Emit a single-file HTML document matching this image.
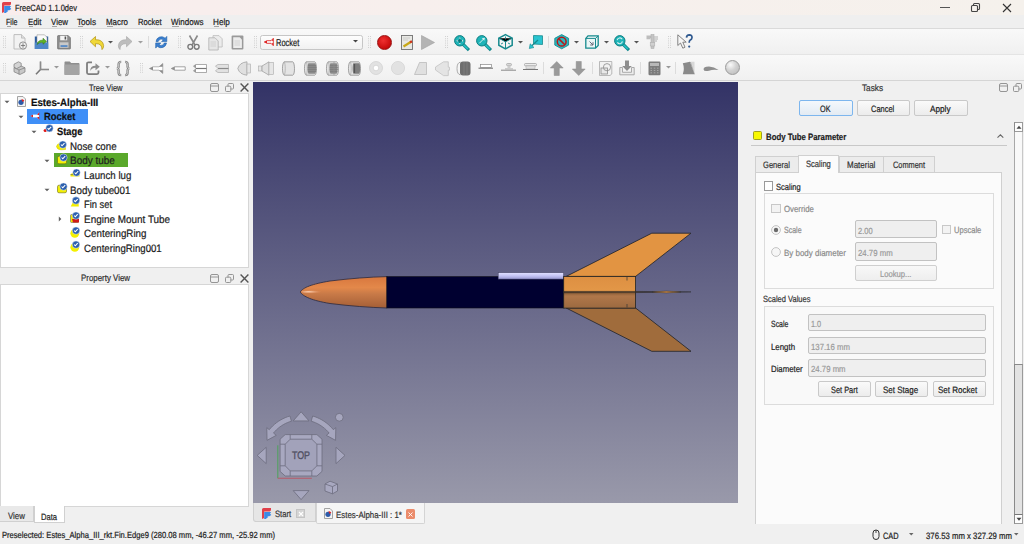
<!DOCTYPE html>
<html><head><meta charset="utf-8">
<style>
*{box-sizing:border-box;margin:0;padding:0}
html,body{width:1024px;height:544px;overflow:hidden;background:#f0f0f0;font-family:"Liberation Sans",sans-serif;color:#1a1a1a}
.a{position:absolute}
.t{position:absolute;white-space:nowrap;line-height:1;transform-origin:0 0}
svg{position:absolute;overflow:visible}
.t{text-rendering:geometricPrecision;-webkit-text-stroke:0.2px currentColor}
</style></head><body>
<div class="a" style="left:0px;top:0px;width:1024px;height:15px;background:linear-gradient(90deg,#f9eded 0%,#f7efed 40%,#f5f1ec 100%)"></div>
<svg style="left:2px;top:2px" width="10" height="11" viewBox="0 0 10 11"><path d="M0 10.8V1.5Q0 0 1.5 0H9V2.2L7.8 3.5H2.2V9.8L1 10.8z" fill="#e0404a"/><path d="M2.2 10.9L2.2 4H9.2L8 5.6L9.3 7L7.4 8.2H5.2L6.2 8.9L3.8 11z" fill="#3a8ae6"/></svg>
<div class="t" style="left:14.60px;top:4.00px;font-size:9.08px;color:#202020;transform:scaleX(0.823);">FreeCAD 1.1.0dev</div>
<div class="a" style="left:940px;top:7px;width:10px;height:1px;background:#555"></div>
<svg style="left:970px;top:2px" width="10" height="10" viewBox="0 0 10 10"><rect x="1.5" y="3.5" width="6" height="6" rx="1" fill="none" stroke="#444" stroke-width="1.1"/><path d="M3.5 3.5V2.5a1 1 0 0 1 1-1h4a1 1 0 0 1 1 1v4a1 1 0 0 1-1 1h-1" fill="none" stroke="#444" stroke-width="1.1"/></svg>
<svg style="left:1002px;top:3px" width="10" height="10" viewBox="0 0 10 10"><path d="M1 1L9 9M9 1L1 9" stroke="#333" stroke-width="1.1"/></svg>
<div class="a" style="left:0px;top:15px;width:1024px;height:13px;background:#efefef"></div>
<div class="t" style="left:6.35px;top:18.00px;font-size:9.08px;color:#202020;transform:scaleX(0.786);">File</div>
<div class="t" style="left:27.85px;top:18.00px;font-size:9.08px;color:#202020;transform:scaleX(0.862);">Edit</div>
<div class="t" style="left:50.85px;top:18.00px;font-size:9.08px;color:#202020;transform:scaleX(0.871);">View</div>
<div class="t" style="left:77.35px;top:18.00px;font-size:9.08px;color:#202020;transform:scaleX(0.896);">Tools</div>
<div class="t" style="left:105.85px;top:18.00px;font-size:9.08px;color:#202020;transform:scaleX(0.872);">Macro</div>
<div class="t" style="left:137.85px;top:18.00px;font-size:9.08px;color:#202020;transform:scaleX(0.840);">Rocket</div>
<div class="t" style="left:170.85px;top:18.00px;font-size:9.08px;color:#202020;transform:scaleX(0.882);">Windows</div>
<div class="t" style="left:212.85px;top:18.00px;font-size:9.08px;color:#202020;transform:scaleX(0.897);">Help</div>
<div class="a" style="left:7px;top:25.6px;width:4px;height:1px;background:#555;opacity:.5"></div>
<div class="a" style="left:28.5px;top:25.6px;width:4px;height:1px;background:#555;opacity:.5"></div>
<div class="a" style="left:51.5px;top:25.6px;width:5px;height:1px;background:#555;opacity:.5"></div>
<div class="a" style="left:78px;top:25.6px;width:4.5px;height:1px;background:#555;opacity:.5"></div>
<div class="a" style="left:106.5px;top:25.6px;width:6px;height:1px;background:#555;opacity:.5"></div>
<div class="a" style="left:171.5px;top:25.6px;width:7px;height:1px;background:#555;opacity:.5"></div>
<div class="a" style="left:213.5px;top:25.6px;width:5px;height:1px;background:#555;opacity:.5"></div>
<div class="a" style="left:0px;top:28px;width:1024px;height:26px;background:linear-gradient(180deg,#f9f9f9,#f0f0f0)"></div>
<div class="a" style="left:0px;top:54px;width:1024px;height:27px;background:linear-gradient(180deg,#f9f9f9,#f0f0f0)"></div>
<div class="a" style="left:0px;top:28px;width:1024px;height:1px;background:#dadada"></div>
<div class="a" style="left:0px;top:54px;width:1024px;height:1px;background:#e4e4e4"></div>
<div class="a" style="left:0px;top:80px;width:1024px;height:1px;background:#d5d5d5"></div>
<svg style="left:3px;top:36px" width="3" height="12" viewBox="0 0 3 12"><path d="M0.5 0V12M2.5 0V12" stroke="#c8c8c8" stroke-width="0.8" stroke-dasharray="1 1.2"/></svg>
<svg style="left:13px;top:34px" width="14" height="16" viewBox="0 0 14 16"><path d="M1 0.6h7.5l3.5 3.5V15H1z" fill="#f2f2f2" stroke="#b8b8b8" stroke-width="0.9"/><path d="M8.5 0.6v3.5H12" fill="#ddd" stroke="#b8b8b8" stroke-width="0.8"/><circle cx="10" cy="11.5" r="3.6" fill="#eee" stroke="#888" stroke-width="0.9"/><path d="M10 9.3v4.4M7.8 11.5h4.4" stroke="#777" stroke-width="0.9"/></svg>
<svg style="left:34px;top:34px" width="15" height="16" viewBox="0 0 15 16"><path d="M0.8 2.5h13.4V15H0.8z" fill="#2b5c9e"/><path d="M3 0.8h7.5l2.5 2.5V9H3z" fill="#fafafa" stroke="#888" stroke-width="0.5"/><path d="M0.8 8.5h13.4V15H0.8z" fill="#4e86c8"/><path d="M3 10.5Q4 5.8 9 6.2V4.2l3.5 3.2L9 10.2V8.4Q5.5 8 3 10.5z" fill="#5fb525" stroke="#2f7010" stroke-width="0.5"/></svg>
<svg style="left:56.5px;top:34.8px" width="14" height="14.2" viewBox="0 0 14 14.2"><path d="M0.6 1.2Q0.6 0.6 1.2 0.6h10l2.2 2.2v10.6q0 .6-.6.6H1.2q-.6 0-.6-.6z" fill="#8e8e8e" stroke="#6a6a6a" stroke-width="0.7"/><rect x="3.2" y="0.8" width="7" height="4.5" fill="#f5f5f5"/><rect x="7.6" y="1.5" width="1.6" height="3" fill="#555"/><rect x="2.5" y="7.3" width="9" height="5.5" fill="#c9c9c9"/><rect x="3.5" y="10.2" width="7" height="1.7" fill="#4f86c6"/></svg>
<svg style="left:80px;top:36px" width="3" height="12" viewBox="0 0 3 12"><path d="M0.5 0V12M2.5 0V12" stroke="#c8c8c8" stroke-width="0.8" stroke-dasharray="1 1.2"/></svg>
<svg style="left:88.5px;top:34.8px" width="16" height="15" viewBox="0 0 16 15"><path d="M1 6.5L6.5 1.5v3.2Q14 4.5 14.6 10.5Q14.8 13 13 14.6Q13.2 8.5 6.5 8.6v3.2z" fill="#f0d838" stroke="#b09010" stroke-width="0.7"/></svg>
<svg style="left:108.2px;top:40.8px" width="5" height="3" viewBox="0 0 5 3"><path d="M0 0h5L2.5 2.6z" fill="#555"/></svg>
<svg style="left:118.4px;top:34.8px" width="15" height="15" viewBox="0 0 15 15"><path d="M14 6.5L8.5 1.5v3.2Q1 4.5 0.4 10.5Q0.2 13 2 14.6Q1.8 8.5 8.5 8.6v3.2z" fill="#bdbdbd" stroke="#a5a5a5" stroke-width="0.6"/></svg>
<svg style="left:138.3px;top:40.8px" width="5" height="3" viewBox="0 0 5 3"><path d="M0 0h5L2.5 2.6z" fill="#a0a0a0"/></svg>
<div class="a" style="left:147.5px;top:36px;width:1px;height:12px;background:#dcdcdc"></div>
<svg style="left:153.5px;top:34.8px" width="14.5" height="14.5" viewBox="0 0 14.5 14.5"><path d="M2 6.5A5.5 5.5 0 0 1 11.2 3.2L12.8 1.4V6.6H7.6L9.4 4.8A3.3 3.3 0 0 0 4.2 6.5z" fill="#3b7fd0" stroke="#1f5fa8" stroke-width="0.6"/><path d="M12.5 8A5.5 5.5 0 0 1 3.3 11.3L1.7 13.1V7.9H6.9L5.1 9.7A3.3 3.3 0 0 0 10.3 8z" fill="#3b7fd0" stroke="#1f5fa8" stroke-width="0.6"/></svg>
<svg style="left:177.5px;top:36px" width="3" height="12" viewBox="0 0 3 12"><path d="M0.5 0V12M2.5 0V12" stroke="#c8c8c8" stroke-width="0.8" stroke-dasharray="1 1.2"/></svg>
<svg style="left:187px;top:34.8px" width="13" height="15" viewBox="0 0 13 15"><path d="M2.5 0.5L8 10M10.5 0.5L5 10" stroke="#8a8a8a" stroke-width="1.6"/><circle cx="3.3" cy="11.8" r="2.4" fill="none" stroke="#7a7a7a" stroke-width="1.4"/><circle cx="9.7" cy="11.8" r="2.4" fill="none" stroke="#7a7a7a" stroke-width="1.4"/></svg>
<svg style="left:208px;top:34.5px" width="15" height="15.5" viewBox="0 0 15 15.5"><path d="M5 0.6h6l3.2 3.2V12H5z" fill="#ececec" stroke="#bbb" stroke-width="0.8"/><path d="M0.8 2.8h6.2l3.2 3.2V15H0.8z" fill="#e6e6e6" stroke="#b0b0b0" stroke-width="0.8"/><path d="M2.5 7h5.5M2.5 9h5.5M2.5 11h5.5" stroke="#c4c4c4" stroke-width="0.6"/></svg>
<svg style="left:231px;top:34.8px" width="13" height="15" viewBox="0 0 13 15"><rect x="0.6" y="0.6" width="11.8" height="13.8" rx="1" fill="#9a9a9a"/><path d="M2.2 2.2h6.5l2.2 2.2v8.5H2.2z" fill="#ececec"/><path d="M3.5 6h5.5M3.5 8h5.5M3.5 10h5.5" stroke="#c4c4c4" stroke-width="0.6"/></svg>
<svg style="left:254px;top:36px" width="3" height="12" viewBox="0 0 3 12"><path d="M0.5 0V12M2.5 0V12" stroke="#c8c8c8" stroke-width="0.8" stroke-dasharray="1 1.2"/></svg>
<div class="a" style="left:259.5px;top:34.5px;width:103px;height:15px;background:linear-gradient(180deg,#fdfdfd,#f1f1f1);border:1px solid #c6c6c6;border-radius:2.5px"></div>
<svg style="left:264px;top:38px" width="10" height="8" viewBox="0 0 10 8"><path d="M0.3 4l2.7-1.3h4L9.3 0.3v7.4L7 5.3H3z" fill="#fff" stroke="#d81818" stroke-width="0.8"/><path d="M0.3 4l2.7-1.3v2.6z" fill="#e01818"/><path d="M7.5 2.7L9.3 0.5v2.2zM7.5 5.3l1.8 2.2V5.3z" fill="#e01818"/></svg>
<div class="t" style="left:276.10px;top:39.00px;font-size:9.88px;color:#1e1e1e;transform:scaleX(0.757);">Rocket</div>
<svg style="left:352.5px;top:40.3px" width="5" height="3" viewBox="0 0 5 3"><path d="M0 0h5L2.5 2.6z" fill="#444"/></svg>
<svg style="left:368.3px;top:36px" width="3" height="12" viewBox="0 0 3 12"><path d="M0.5 0V12M2.5 0V12" stroke="#c8c8c8" stroke-width="0.8" stroke-dasharray="1 1.2"/></svg>
<div class="a" style="left:377px;top:34.6px;width:15px;height:15px;border-radius:50%;background:radial-gradient(circle at 40% 35%,#f03030,#c80c0c 70%,#a00808);border:0.6px solid #9a1010"></div>
<svg style="left:401px;top:34.5px" width="12" height="15" viewBox="0 0 12 15"><rect x="0.5" y="0.5" width="11" height="14" fill="#e8e8e4" stroke="#707070" stroke-width="0.9"/><path d="M2 3h7M2 5h5" stroke="#bbb" stroke-width="0.6"/><path d="M2.5 11.5L10.5 6.5" stroke="#c8a818" stroke-width="2.2"/><path d="M9 7.4L11 6.2" stroke="#d03020" stroke-width="2.2"/></svg>
<svg style="left:421px;top:34.8px" width="14" height="15" viewBox="0 0 14 15"><path d="M0.5 0.5L13.5 7.5L0.5 14.5z" fill="#b4b4b4" stroke="#a0a0a0" stroke-width="0.6"/></svg>
<svg style="left:445px;top:36px" width="3" height="12" viewBox="0 0 3 12"><path d="M0.5 0V12M2.5 0V12" stroke="#c8c8c8" stroke-width="0.8" stroke-dasharray="1 1.2"/></svg>
<svg style="left:453.5px;top:34.5px" width="16" height="16" viewBox="0 0 16 16"><path d="M9 9.2L13.8 14" stroke="#148a8e" stroke-width="3.2" stroke-linecap="square"/><path d="M9 9.2L13.8 14" stroke="#25c0c4" stroke-width="1.6"/><circle cx="5.8" cy="5.8" r="5.2" fill="#1eb4b8" stroke="#0e7e82" stroke-width="1"/><path d="M5.8 2.5v6.6M2.5 5.8h6.6" stroke="#0e6a6e" stroke-width="1"/><path d="M5.8 2.3l-1.2 1.3h2.4zM5.8 9.3l-1.2-1.3h2.4zM2.3 5.8l1.3-1.2v2.4zM9.3 5.8l-1.3-1.2v2.4z" fill="#d8f0f0"/></svg>
<svg style="left:475.5px;top:34.5px" width="16" height="16" viewBox="0 0 16 16"><path d="M9 9.2L13.8 14" stroke="#148a8e" stroke-width="3.2" stroke-linecap="square"/><path d="M9 9.2L13.8 14" stroke="#25c0c4" stroke-width="1.6"/><circle cx="5.8" cy="5.8" r="5.2" fill="#1eb4b8" stroke="#0e7e82" stroke-width="1"/><path d="M3.3 8.3L8.3 3.3" stroke="#d8f0f0" stroke-width="1"/><path d="M8.8 2.8l-3 .5 2.5 2.5z" fill="#d8f0f0"/></svg>
<svg style="left:497.8px;top:34.4px" width="15" height="15.4" viewBox="0 0 15 15.4"><path d="M7.5 0.6L14.2 4.2V11.2L7.5 14.8L0.8 11.2V4.2z" fill="none" stroke="#178a8e" stroke-width="1.5"/><path d="M0.8 4.2L7.5 7.8L14.2 4.2M7.5 7.8V14.8" stroke="#178a8e" stroke-width="1"/><path d="M7.5 2.5v3M3 10l2-1M12 10l-2-1" stroke="#178a8e" stroke-width="0.9"/></svg>
<svg style="left:517.5px;top:40.8px" width="5" height="3" viewBox="0 0 5 3"><path d="M0 0h5L2.5 2.6z" fill="#555"/></svg>
<svg style="left:529px;top:35.3px" width="14" height="14" viewBox="0 0 14 14"><path d="M4.5 0.5L13.5 0.8V9.5L4.5 9z" fill="#29c4d0" stroke="#178a8e" stroke-width="0.8"/><path d="M9 5L2.5 11" stroke="#178a8e" stroke-width="1.3"/><path d="M0.3 13.6L1.2 8.8L5 12.5z" fill="#29c4d0" stroke="#178a8e" stroke-width="0.6"/></svg>
<div class="a" style="left:548.3px;top:36px;width:1px;height:12px;background:#dcdcdc"></div>
<svg style="left:554.4px;top:34.4px" width="15.4" height="15.4" viewBox="0 0 15.4 15.4"><path d="M7.7 0.6L14.6 4.3V11.1L7.7 14.8L0.8 11.1V4.3z" fill="#29b8c0" stroke="#178a8e" stroke-width="0.9"/><circle cx="7.7" cy="7.7" r="4.4" fill="none" stroke="#b81818" stroke-width="1.5"/><path d="M4.6 4.6L10.8 10.8" stroke="#b81818" stroke-width="1.5"/></svg>
<svg style="left:574.3px;top:40.8px" width="5" height="3" viewBox="0 0 5 3"><path d="M0 0h5L2.5 2.6z" fill="#555"/></svg>
<svg style="left:585.2px;top:35.3px" width="14" height="14" viewBox="0 0 14 14"><path d="M3 0.8h10.2v9.6L10.5 13.2H0.8V3.4z" fill="#eaf6f6" stroke="#178a8e" stroke-width="1.3"/><path d="M0.8 3.4h9.7V13.2M10.5 3.4L13.2 0.8" fill="none" stroke="#178a8e" stroke-width="1"/><path d="M4.5 6.5l3.5 3.5M5.2 10h2.8V7.2" fill="none" stroke="#667" stroke-width="1"/></svg>
<svg style="left:604.2px;top:40.8px" width="5" height="3" viewBox="0 0 5 3"><path d="M0 0h5L2.5 2.6z" fill="#555"/></svg>
<svg style="left:614px;top:34.5px" width="16" height="16" viewBox="0 0 16 16"><path d="M9 9.2L13.8 14" stroke="#148a8e" stroke-width="3.2" stroke-linecap="square"/><path d="M9 9.2L13.8 14" stroke="#25c0c4" stroke-width="1.6"/><circle cx="5.8" cy="5.8" r="5.2" fill="#1eb4b8" stroke="#0e7e82" stroke-width="1"/><path d="M3.2 5.2A2.7 2.7 0 0 1 8.2 4.2M8.4 6.4A2.7 2.7 0 0 1 3.4 7.4" fill="none" stroke="#d8f0f0" stroke-width="1.1"/></svg>
<svg style="left:634.3px;top:40.8px" width="5" height="3" viewBox="0 0 5 3"><path d="M0 0h5L2.5 2.6z" fill="#555"/></svg>
<svg style="left:646px;top:34.4px" width="12.5" height="15" viewBox="0 0 12.5 15"><path d="M0.5 1.5h7.5v2.5H4.5v1.2H0.5z" fill="#bdbdbd"/><rect x="5" y="0.5" width="3" height="14" fill="#c4c4c4" stroke="#a8a8a8" stroke-width="0.5"/><path d="M8 3h4M8 5h4M8 7h3" stroke="#b0b0b0" stroke-width="1"/><rect x="4.2" y="8.5" width="4.6" height="3.5" fill="#d0d0d0" stroke="#aaa" stroke-width="0.5"/></svg>
<svg style="left:668.4px;top:36px" width="3" height="12" viewBox="0 0 3 12"><path d="M0.5 0V12M2.5 0V12" stroke="#c8c8c8" stroke-width="0.8" stroke-dasharray="1 1.2"/></svg>
<svg style="left:677.2px;top:34.4px" width="16" height="15.5" viewBox="0 0 16 15.5"><path d="M0.8 0.8L0.8 11.5L3.5 9L5.8 14.2L8 13.2L5.8 8.2H9.2z" fill="#f6f6f6" stroke="#777" stroke-width="0.9"/><path d="M9.5 3.6Q9.6 0.8 12.3 0.8Q15.2 0.9 15 3.6Q14.8 5.3 13 6.3Q12.2 6.8 12.2 8.8" fill="none" stroke="#305a90" stroke-width="1.7"/><circle cx="12.2" cy="12.6" r="1.1" fill="#305a90"/></svg>
<svg style="left:3px;top:62.5px" width="3" height="11.0" viewBox="0 0 3 11.0"><path d="M0.5 0V11.0M2.5 0V11.0" stroke="#c8c8c8" stroke-width="0.8" stroke-dasharray="1 1.2"/></svg>
<svg style="left:12.7px;top:60.8px" width="13" height="14" viewBox="0 0 13 14"><path d="M1 6.5L6 4L12 6.8V11L7 13.5L1 10.8z" fill="#c8c8c8" stroke="#7a7a7a" stroke-width="0.7"/><path d="M1 6.5L6 9V13.5M6 9l6-2.2" fill="none" stroke="#7a7a7a" stroke-width="0.7"/><path d="M1 3.2L5.5 0.8L8.2 2.2V5.2L3.7 7.6L1 6.2z" fill="#d4d4d4" stroke="#7a7a7a" stroke-width="0.7"/></svg>
<svg style="left:35px;top:60.8px" width="14.5" height="14" viewBox="0 0 14.5 14"><path d="M5.5 0.6V8.5M5.5 8.5H14M5.5 8.5L1 13.2" fill="none" stroke="#777" stroke-width="1.6"/><path d="M5.5 0.6V8.5H14" fill="none" stroke="#999" stroke-width="0.6"/></svg>
<svg style="left:53.5px;top:66.3px" width="5" height="3" viewBox="0 0 5 3"><path d="M0 0h5L2.5 2.6z" fill="#999"/></svg>
<svg style="left:63.7px;top:61.3px" width="15.5" height="14.2" viewBox="0 0 15.5 14.2"><path d="M0.5 1.2Q0.5 0.5 1.2 0.5h4.5l1.5 1.6h7.5q.8 0 .8.8v10.4q0 .8-.8.8H1.2q-.7 0-.7-.8z" fill="#8e8e8e"/><path d="M0.5 3.5h14.5v9.8q0 .8-.8.8H1.2q-.7 0-.7-.8z" fill="#a4a4a4"/></svg>
<svg style="left:86.3px;top:61.3px" width="14.2" height="13.8" viewBox="0 0 14.2 13.8"><path d="M6 1.3H2.5q-1.5 0-1.5 1.5v8.8q0 1.5 1.5 1.5h8.5q1.5 0 1.5-1.5V9.5" fill="none" stroke="#7e7e7e" stroke-width="1.8"/><path d="M4.2 10Q4.2 4.8 9.5 4.8V2.2L13.8 5.8L9.5 9.3V6.8Q6.2 6.8 4.2 10z" fill="#8e8e8e"/></svg>
<svg style="left:105.3px;top:66.3px" width="5" height="3" viewBox="0 0 5 3"><path d="M0 0h5L2.5 2.6z" fill="#999"/></svg>
<svg style="left:116.2px;top:60.8px" width="14.2" height="15" viewBox="0 0 14.2 15"><path d="M5.2 0.8Q2.6 0.8 2.6 3.2V5.6Q2.6 7.5 0.8 7.5Q2.6 7.5 2.6 9.4V11.8Q2.6 14.2 5.2 14.2M9 0.8Q11.6 0.8 11.6 3.2V5.6Q11.6 7.5 13.4 7.5Q11.6 7.5 11.6 9.4V11.8Q11.6 14.2 9 14.2" fill="none" stroke="#7e7e7e" stroke-width="2.3"/><path d="M5.2 0.8Q2.6 0.8 2.6 3.2V5.6Q2.6 7.5 0.8 7.5Q2.6 7.5 2.6 9.4V11.8Q2.6 14.2 5.2 14.2M9 0.8Q11.6 0.8 11.6 3.2V5.6Q11.6 7.5 13.4 7.5Q11.6 7.5 11.6 9.4V11.8Q11.6 14.2 9 14.2" fill="none" stroke="#e6e6e6" stroke-width="0.7"/></svg>
<svg style="left:140px;top:62.5px" width="3" height="11.0" viewBox="0 0 3 11.0"><path d="M0.5 0V11.0M2.5 0V11.0" stroke="#c8c8c8" stroke-width="0.8" stroke-dasharray="1 1.2"/></svg>
<svg style="left:149px;top:62.6px" width="14.4" height="11" viewBox="0 0 14.4 11"><path d="M0.5 5.5L4 3.8h6L13.8 0.5V10.5L10 7.2H4z" fill="#fff" stroke="#888" stroke-width="0.6"/><path d="M0.5 5.5L4 3.8V7.2z" fill="#8a8a8a"/><path d="M10 3.8L13.8 0.5V3.8zM10 7.2L13.8 10.5V7.2z" fill="#8a8a8a"/></svg>
<svg style="left:171.3px;top:65.5px" width="15" height="6" viewBox="0 0 15 6"><path d="M0.3 2.5L3.8 0.8H14.2V4.2H3.8z" fill="#fff" stroke="#8e8e8e" stroke-width="0.8"/><path d="M0.3 2.5L3.8 0.8v3.4z" fill="#8e8e8e"/></svg>
<svg style="left:193.3px;top:63.9px" width="14" height="9.2" viewBox="0 0 14 9.2"><path d="M3 0.5H13.5V8.5H3L0.5 7L3 4.5L0.5 2z" fill="#fff" stroke="#888" stroke-width="0.7"/><path d="M3 4.5H13.5" stroke="#777" stroke-width="1.2"/><path d="M0.5 2L3 0.5V4.5zM0.5 7L3 4.5V8.5z" fill="#999"/></svg>
<svg style="left:214.8px;top:63.9px" width="14.2" height="9.2" viewBox="0 0 14.2 9.2"><path d="M3 0.5H13.5V8.5H3L0.5 7L3 4.5L0.5 2z" fill="#e2e2e2" stroke="#aaa" stroke-width="0.7"/><path d="M3 4.5H13.5" stroke="#8a8a8a" stroke-width="1.2"/></svg>
<svg style="left:236.8px;top:60.8px" width="14.2" height="15" viewBox="0 0 14.2 15"><path d="M10 0.8Q2.5 1.5 0.8 7.5Q2.5 13.5 10 14.2z" fill="#e0e0e0" stroke="#9a9a9a" stroke-width="0.7"/><rect x="10" y="3" width="3.6" height="9" fill="#e6e6e6" stroke="#aaa" stroke-width="0.6"/></svg>
<svg style="left:258.1px;top:60.8px" width="16" height="15" viewBox="0 0 16 15"><rect x="0.5" y="5" width="3.5" height="5" fill="#e6e6e6" stroke="#aaa" stroke-width="0.6"/><path d="M4 5L11 0.8V14.2L4 10z" fill="#e0e0e0" stroke="#9a9a9a" stroke-width="0.7"/><rect x="11" y="1.5" width="4.5" height="12" fill="#e6e6e6" stroke="#aaa" stroke-width="0.6"/></svg>
<svg style="left:280.5px;top:60.8px" width="15" height="15" viewBox="0 0 15 15"><path d="M3.2 0.8H11.8C13.9 1.6 14.2 13.4 11.8 14.2H3.2C0.9 13.4 0.9 1.6 3.2 0.8z" fill="#e4e4e4" stroke="#8e8e8e" stroke-width="0.8"/><path d="M3.2 0.8C4.6 2.5 4.6 12.5 3.2 14.2" fill="none" stroke="#9a9a9a" stroke-width="0.6"/></svg>
<svg style="left:302.5px;top:60.8px" width="15" height="15" viewBox="0 0 15 15"><path d="M3.2 0.8H11.8C13.9 1.6 14.2 13.4 11.8 14.2H3.2C0.9 13.4 0.9 1.6 3.2 0.8z" fill="#e4e4e4" stroke="#8e8e8e" stroke-width="0.8"/><path d="M3.2 0.8C4.6 2.5 4.6 12.5 3.2 14.2" fill="none" stroke="#9a9a9a" stroke-width="0.6"/><path d="M5.5 2.3H12C13.6 3 13.6 12 12 12.7H5.5C4.3 12 4.3 3 5.5 2.3z" fill="#8a8a8a"/><path d="M5 4.5H13M4.8 6.5H13.3M4.8 8.5H13.3M5 10.5H13" stroke="#777" stroke-width="0.6"/></svg>
<svg style="left:324.9px;top:60.8px" width="15" height="15" viewBox="0 0 15 15"><path d="M3.2 0.8H11.8C13.9 1.6 14.2 13.4 11.8 14.2H3.2C0.9 13.4 0.9 1.6 3.2 0.8z" fill="#e4e4e4" stroke="#8e8e8e" stroke-width="0.8"/><path d="M3.2 0.8C4.6 2.5 4.6 12.5 3.2 14.2" fill="none" stroke="#9a9a9a" stroke-width="0.6"/><path d="M5.5 2.3H11.5C13 3 13 12 11.5 12.7H5.5C4.3 12 4.3 3 5.5 2.3z" fill="#8a8a8a"/><path d="M5 4.5H12.5M4.8 6.5H13M4.8 8.5H13M5 10.5H12.5" stroke="#777" stroke-width="0.6"/><path d="M9 0.8V14.2" stroke="#8e8e8e" stroke-width="0.6"/></svg>
<svg style="left:347px;top:60.8px" width="15" height="15" viewBox="0 0 15 15"><path d="M3.2 0.8H11.8C13.9 1.6 14.2 13.4 11.8 14.2H3.2C0.9 13.4 0.9 1.6 3.2 0.8z" fill="#e4e4e4" stroke="#8e8e8e" stroke-width="0.8"/><path d="M3.2 0.8C4.6 2.5 4.6 12.5 3.2 14.2" fill="none" stroke="#9a9a9a" stroke-width="0.6"/><path d="M6.5 2.3H12C13.6 3 13.6 12 12 12.7H6.5C5.3 12 5.3 3 6.5 2.3z" fill="#7e7e7e"/><path d="M7.5 3v9" stroke="#555" stroke-width="1.2"/></svg>
<svg style="left:369px;top:61.3px" width="14" height="14" viewBox="0 0 14 14"><circle cx="7" cy="7" r="6.5" fill="#e2e2e2" stroke="#cfcfcf" stroke-width="0.7"/><circle cx="7" cy="7" r="2.8" fill="#fff" stroke="#cfcfcf" stroke-width="0.7"/></svg>
<svg style="left:390.8px;top:61.3px" width="14" height="14" viewBox="0 0 14 14"><circle cx="7" cy="7" r="6.6" fill="#e2e2e2" stroke="#d2d2d2" stroke-width="0.7"/></svg>
<svg style="left:413.8px;top:61.7px" width="13" height="13" viewBox="0 0 13 13"><path d="M0.5 12.5L5.5 0.5h7v12z" fill="#e0e0e0" stroke="#b5b5b5" stroke-width="0.7"/></svg>
<svg style="left:435px;top:60.8px" width="15" height="15" viewBox="0 0 15 15"><path d="M0.5 6l8-5.2h4.8v5.4H14.5v3H13.3v5.4H8.5L0.5 9z" fill="#e4e4e4" stroke="#bdbdbd" stroke-width="0.7"/></svg>
<svg style="left:456px;top:60.8px" width="15" height="15" viewBox="0 0 15 15"><path d="M4.5 1.2Q1 1.5 1 7.5Q1 13.5 4.5 13.8" fill="none" stroke="#999" stroke-width="0.8"/><rect x="4" y="0.6" width="10.5" height="13.8" rx="3" fill="#6e6e6e"/><path d="M8 1v13M11 1v13" stroke="#888" stroke-width="0.6"/></svg>
<svg style="left:478px;top:64px" width="15.5" height="5.5" viewBox="0 0 15.5 5.5"><rect x="2.5" y="0.5" width="11" height="3" fill="#fff" stroke="#888" stroke-width="0.7"/><path d="M0.5 4.2H15" stroke="#777" stroke-width="1.1"/></svg>
<svg style="left:501px;top:63px" width="15" height="8" viewBox="0 0 15 8"><rect x="5.5" y="0.5" width="5" height="2.2" rx="1" fill="#d8d8d8" stroke="#999" stroke-width="0.6"/><rect x="6.5" y="2.7" width="3" height="2.5" fill="#ccc"/><rect x="4" y="5" width="8" height="1.5" fill="#ccc"/><path d="M0 7.2H15" stroke="#888" stroke-width="1"/></svg>
<svg style="left:522.7px;top:63px" width="15" height="7.5" viewBox="0 0 15 7.5"><rect x="1.5" y="0.5" width="12" height="2.4" rx="1" fill="#ececec" stroke="#999" stroke-width="0.7"/><rect x="3" y="2.9" width="9" height="3" fill="#e0e0e0" stroke="#aaa" stroke-width="0.5"/><path d="M0 6.5H15" stroke="#777" stroke-width="1"/></svg>
<div class="a" style="left:543.4px;top:62px;width:1px;height:12px;background:#dcdcdc"></div>
<svg style="left:550px;top:60.8px" width="13.5" height="15" viewBox="0 0 13.5 15"><path d="M6.75 0.5L13.2 7H9.3V14.5H4.2V7H0.3z" fill="#9a9a9a" stroke="#8a8a8a" stroke-width="0.5"/></svg>
<svg style="left:572px;top:60.8px" width="13.5" height="15" viewBox="0 0 13.5 15"><path d="M6.75 14.5L13.2 8H9.3V0.5H4.2V8H0.3z" fill="#9a9a9a" stroke="#8a8a8a" stroke-width="0.5"/></svg>
<div class="a" style="left:591.7px;top:62px;width:1px;height:12px;background:#dcdcdc"></div>
<svg style="left:598.5px;top:60.8px" width="13.5" height="15" viewBox="0 0 13.5 15"><path d="M0.5 0.5H12.8V13L11 14.5H0.5z" fill="#f2f2f2" stroke="#aaa" stroke-width="0.8"/><rect x="2" y="7" width="6.5" height="6" fill="#e8e8e8" stroke="#8a8a8a" stroke-width="0.8"/><circle cx="8" cy="6.2" r="3.6" fill="none" stroke="#8a8a8a" stroke-width="0.8"/></svg>
<svg style="left:619.2px;top:60.4px" width="16" height="15.5" viewBox="0 0 16 15.5"><path d="M0.8 7.5V14.8H15.2V7.5H12.5V12.3H3.5V7.5z" fill="#ececec" stroke="#999" stroke-width="0.8"/><path d="M6 0.6h4v5.5h2.8L8 11L3.2 6.1H6z" fill="#8e8e8e"/></svg>
<div class="a" style="left:640.3px;top:62px;width:1px;height:12px;background:#dcdcdc"></div>
<svg style="left:647.7px;top:60.8px" width="13" height="14.8" viewBox="0 0 13 14.8"><rect x="0.5" y="0.5" width="12" height="13.8" rx="1.2" fill="#7c7c7c"/><rect x="2" y="2" width="9" height="3" fill="#b8b8b8"/><path d="M2.5 7.2h1.5M5.8 7.2h1.5M9 7.2h1.5M2.5 9.5h1.5M5.8 9.5h1.5M9 9.5h1.5M2.5 11.8h1.5M5.8 11.8h1.5M9 11.8h1.5" stroke="#a8a8a8" stroke-width="1"/></svg>
<svg style="left:666.1px;top:66.3px" width="5" height="3" viewBox="0 0 5 3"><path d="M0 0h5L2.5 2.6z" fill="#999"/></svg>
<div class="a" style="left:675.1px;top:62px;width:1px;height:12px;background:#dcdcdc"></div>
<svg style="left:682.3px;top:61.3px" width="13" height="13.8" viewBox="0 0 13 13.8"><path d="M0.8 2.2L8 0.8Q10.2 7 12.5 13.3H0.8Q2.8 7.5 0.8 2.2z" fill="#8a8a8a"/><path d="M8 0.8h4.5v12.5" fill="#d8d8d8"/><path d="M8.3 1l4 12.2" stroke="#888" stroke-width="0.6"/></svg>
<svg style="left:703px;top:65.7px" width="16" height="5.5" viewBox="0 0 16 5.5"><path d="M0.6 3.6Q0.2 0.6 6 0.6Q11 0.8 15.6 4Q10 3 6 4.8Q0.8 5.8 0.6 3.6z" fill="#8e8e8e"/></svg>
<div class="a" style="left:725.2px;top:60.3px;width:15.2px;height:15.2px;border-radius:50%;background:radial-gradient(circle at 35% 30%,#fafafa,#d2d2d2 45%,#b8b8b8);border:0.8px solid #9a9a9a"></div>
<div class="a" style="left:0px;top:81px;width:250px;height:13px;background:#f0f0f0"></div>
<div class="a" style="left:0px;top:93px;width:249px;height:1px;background:#d6d6d6"></div>
<div class="a" style="left:0px;top:94px;width:249px;height:174px;background:#fff;border:1px solid #d6d6d6;border-top:none"></div>
<div class="t" style="left:89.00px;top:84.00px;font-size:9.30px;color:#303030;transform:scaleX(0.812);">Tree View</div>
<div class="a" style="left:0px;top:284px;width:249px;height:1px;background:#d6d6d6"></div>
<div class="a" style="left:0px;top:285px;width:249px;height:222px;background:#fff;border:1px solid #d6d6d6;border-top:none"></div>
<div class="t" style="left:81.40px;top:274.00px;font-size:9.30px;color:#303030;transform:scaleX(0.849);">Property View</div>
<div class="a" style="left:27px;top:109px;width:61px;height:14.5px;background:#3f8ff7"></div>
<div class="a" style="left:54px;top:153px;width:74px;height:14px;background:#5aa82b"></div>
<svg style="left:4.2px;top:100.2px" width="6" height="4" viewBox="0 0 6 4"><path d="M0.5 0.8h5L3 3.3z" fill="#606060"/></svg>
<div class="t" style="left:30.50px;top:99.00px;font-size:10.47px;font-weight:bold;color:#101010;transform:scaleX(0.925);">Estes-Alpha-III</div>
<svg style="left:17px;top:96px" width="9" height="11" viewBox="0 0 9 11"><path d="M0.5 0.5h5.5l2.5 2.5v7.5h-8z" fill="#f4f4f4" stroke="#9a9a9a" stroke-width="0.9"/><circle cx="4" cy="6.3" r="2.6" fill="#2d5aa8"/><path d="M4.3 3.3a2.5 2.5 0 0 1 3 1.5l-1.6 1.2z" fill="#e02020"/></svg>
<svg style="left:17.5px;top:114.85000000000001px" width="6" height="4" viewBox="0 0 6 4"><path d="M0.5 0.8h5L3 3.3z" fill="#606060"/></svg>
<div class="t" style="left:44.00px;top:113.00px;font-size:10.47px;font-weight:bold;color:#101010;transform:scaleX(0.897);">Rocket</div>
<svg style="left:30px;top:112px" width="10" height="8" viewBox="0 0 10 8"><path d="M0.5 4L3 2.8h4L9 0.5v7L7 5.2H3z" fill="#fff"/><path d="M0.3 4l2.7-1.3v2.6z" fill="#e01818"/><path d="M7 2.8L9.3 0.3v3zM7 5.2l2.3 2.5v-3z" fill="#e01818"/><rect x="3" y="2.8" width="4.2" height="2.4" fill="#fff"/></svg>
<svg style="left:30.799999999999997px;top:129.50000000000003px" width="6" height="4" viewBox="0 0 6 4"><path d="M0.5 0.8h5L3 3.3z" fill="#606060"/></svg>
<div class="t" style="left:57.20px;top:128.00px;font-size:10.47px;font-weight:bold;color:#101010;transform:scaleX(0.891);">Stage</div>
<svg style="left:43px;top:124px" width="11" height="9" viewBox="0 0 11 9"><circle cx="2.2" cy="6.5" r="1.6" fill="#e01818"/><circle cx="6.5" cy="4.2" r="3.7" fill="#2b5fae" stroke="#e8eef8" stroke-width="0.5"/><path d="M4.6 4.1000000000000005l1.2 1.3 2.4-2.6" fill="none" stroke="#fff" stroke-width="1.1"/></svg>
<div class="t" style="left:70.40px;top:142.00px;font-size:10.76px;color:#202020;transform:scaleX(0.906);">Nose cone</div>
<svg style="left:56px;top:141px" width="11" height="10" viewBox="0 0 11 10"><path d="M0.5 5.5Q1 2.2 5 2.4L9.5 3.5v5L5 8.8Q1 8.8 0.5 5.5z" fill="#f4ef00" stroke="#c8c000" stroke-width="0.5"/><circle cx="6.8" cy="3.6" r="3.7" fill="#2b5fae" stroke="#e8eef8" stroke-width="0.5"/><path d="M4.9 3.5l1.2 1.3 2.4-2.6" fill="none" stroke="#fff" stroke-width="1.1"/></svg>
<svg style="left:44px;top:158.8px" width="6" height="4" viewBox="0 0 6 4"><path d="M0.5 0.8h5L3 3.3z" fill="#606060"/></svg>
<div class="t" style="left:70.40px;top:156.00px;font-size:10.76px;color:#202020;transform:scaleX(0.927);">Body tube</div>
<svg style="left:56.5px;top:153.5px" width="10" height="10" viewBox="0 0 10 10"><rect x="0.5" y="2.2" width="9" height="7.6" rx="1.5" fill="#f4f000" stroke="#6a6a10" stroke-width="0.6"/><circle cx="6.5" cy="3.6" r="3.7" fill="#2b5fae" stroke="#e8eef8" stroke-width="0.5"/><path d="M4.6 3.5l1.2 1.3 2.4-2.6" fill="none" stroke="#fff" stroke-width="1.1"/></svg>
<div class="t" style="left:84.00px;top:171.00px;font-size:10.76px;color:#202020;transform:scaleX(0.899);">Launch lug</div>
<svg style="left:69.5px;top:169.15px" width="11" height="9" viewBox="0 0 11 9"><path d="M0.5 5.5Q2 3.8 5 4.2L9.5 5v2.5H0.5z" fill="#f4ef00"/><path d="M0.5 5.6h5" stroke="#555" stroke-width="0.6"/><circle cx="6.5" cy="3.6" r="3.7" fill="#2b5fae" stroke="#e8eef8" stroke-width="0.5"/><path d="M4.6 3.5l1.2 1.3 2.4-2.6" fill="none" stroke="#fff" stroke-width="1.1"/></svg>
<svg style="left:44px;top:188.10000000000002px" width="6" height="4" viewBox="0 0 6 4"><path d="M0.5 0.8h5L3 3.3z" fill="#606060"/></svg>
<div class="t" style="left:70.40px;top:186.00px;font-size:10.76px;color:#202020;transform:scaleX(0.911);">Body tube001</div>
<svg style="left:56.5px;top:182.8px" width="10" height="10" viewBox="0 0 10 10"><rect x="0.5" y="2.2" width="9" height="7.6" rx="1.5" fill="#f4f000" stroke="#6a6a10" stroke-width="0.6"/><circle cx="6.5" cy="3.6" r="3.7" fill="#2b5fae" stroke="#e8eef8" stroke-width="0.5"/><path d="M4.6 3.5l1.2 1.3 2.4-2.6" fill="none" stroke="#fff" stroke-width="1.1"/></svg>
<div class="t" style="left:84.00px;top:200.00px;font-size:10.76px;color:#202020;transform:scaleX(0.868);">Fin set</div>
<svg style="left:70px;top:197.45000000000002px" width="10" height="10" viewBox="0 0 10 10"><path d="M0.7 9.6L3 5h5.5l0.3 4.6z" fill="#f4ef00"/><circle cx="6" cy="3.5" r="3.7" fill="#2b5fae" stroke="#e8eef8" stroke-width="0.5"/><path d="M4.1 3.4l1.2 1.3 2.4-2.6" fill="none" stroke="#fff" stroke-width="1.1"/></svg>
<svg style="left:58.3px;top:216.1px" width="4" height="6" viewBox="0 0 4 6"><path d="M0.8 0.5v5L3.3 3z" fill="#606060"/></svg>
<div class="t" style="left:84.00px;top:215.00px;font-size:10.76px;color:#202020;transform:scaleX(0.924);">Engine Mount Tube</div>
<svg style="left:70px;top:212.1px" width="10" height="11" viewBox="0 0 10 11"><rect x="0.5" y="2.5" width="8" height="8" rx="1" fill="#f0e800" stroke="#666" stroke-width="0.6"/><path d="M2 7h7v3.5H3z" fill="#d01818"/><circle cx="6" cy="3.6" r="3.7" fill="#2b5fae" stroke="#e8eef8" stroke-width="0.5"/><path d="M4.1 3.5l1.2 1.3 2.4-2.6" fill="none" stroke="#fff" stroke-width="1.1"/></svg>
<div class="t" style="left:84.00px;top:229.00px;font-size:10.76px;color:#202020;transform:scaleX(0.909);">CenteringRing</div>
<svg style="left:70px;top:226.75px" width="10" height="11" viewBox="0 0 10 11"><circle cx="4.8" cy="6.3" r="4.4" fill="#f4f000"/><circle cx="6" cy="3.6" r="3.7" fill="#2b5fae" stroke="#e8eef8" stroke-width="0.5"/><path d="M4.1 3.5l1.2 1.3 2.4-2.6" fill="none" stroke="#fff" stroke-width="1.1"/></svg>
<div class="t" style="left:84.00px;top:244.00px;font-size:10.76px;color:#202020;transform:scaleX(0.897);">CenteringRing001</div>
<svg style="left:70px;top:241.4px" width="10" height="11" viewBox="0 0 10 11"><circle cx="4.8" cy="6.3" r="4.4" fill="#f4f000"/><circle cx="6" cy="3.6" r="3.7" fill="#2b5fae" stroke="#e8eef8" stroke-width="0.5"/><path d="M4.1 3.5l1.2 1.3 2.4-2.6" fill="none" stroke="#fff" stroke-width="1.1"/></svg>
<svg style="left:210px;top:83.3px" width="9" height="9" viewBox="0 0 9 9"><rect x="0.5" y="0.5" width="8" height="8" rx="1.5" fill="none" stroke="#8a8a8a" stroke-width="0.9"/><path d="M0.5 3h8" stroke="#8a8a8a" stroke-width="0.9"/></svg>
<svg style="left:224.5px;top:83.3px" width="9" height="9" viewBox="0 0 9 9"><rect x="0.5" y="3.2" width="5.3" height="5.3" rx="1" fill="none" stroke="#8a8a8a" stroke-width="0.9"/><path d="M3 3.2V1.5a1 1 0 0 1 1-1h3.5a1 1 0 0 1 1 1V5a1 1 0 0 1-1 1H5.8" fill="none" stroke="#8a8a8a" stroke-width="0.9"/></svg>
<svg style="left:240px;top:83.3px" width="9" height="9" viewBox="0 0 9 9"><path d="M0.6 0.6l7.8 7.8M8.4 0.6L0.6 8.4" stroke="#555" stroke-width="1.4"/></svg>
<svg style="left:210px;top:274px" width="9" height="9" viewBox="0 0 9 9"><rect x="0.5" y="0.5" width="8" height="8" rx="1.5" fill="none" stroke="#8a8a8a" stroke-width="0.9"/><path d="M0.5 3h8" stroke="#8a8a8a" stroke-width="0.9"/></svg>
<svg style="left:224.5px;top:274px" width="9" height="9" viewBox="0 0 9 9"><rect x="0.5" y="3.2" width="5.3" height="5.3" rx="1" fill="none" stroke="#8a8a8a" stroke-width="0.9"/><path d="M3 3.2V1.5a1 1 0 0 1 1-1h3.5a1 1 0 0 1 1 1V5a1 1 0 0 1-1 1H5.8" fill="none" stroke="#8a8a8a" stroke-width="0.9"/></svg>
<svg style="left:240px;top:274px" width="9" height="9" viewBox="0 0 9 9"><path d="M0.6 0.6l7.8 7.8M8.4 0.6L0.6 8.4" stroke="#555" stroke-width="1.4"/></svg>
<div class="a" style="left:253px;top:82px;width:485px;height:421px;background:linear-gradient(180deg,#333366 0%,#9999aa 100%)"></div>
<svg style="left:253px;top:82px" width="485" height="421" viewBox="0 0 485 421">
<defs>
<linearGradient id="nose" x1="0" y1="0" x2="0" y2="1"><stop offset="0" stop-color="#d8773e"/><stop offset="0.35" stop-color="#e3884a"/><stop offset="0.55" stop-color="#c87a48"/><stop offset="1" stop-color="#a45e36"/></linearGradient>
<linearGradient id="can" x1="0" y1="0" x2="0" y2="1"><stop offset="0" stop-color="#dd8f42"/><stop offset="0.5" stop-color="#e39848"/><stop offset="0.52" stop-color="#8f6038"/><stop offset="0.62" stop-color="#b0774a"/><stop offset="1" stop-color="#9c6a40"/></linearGradient>
<radialGradient id="hl" cx="0.35" cy="0.5" r="0.6"><stop offset="0" stop-color="#ffe0c8" stop-opacity="0.95"/><stop offset="1" stop-color="#e89060" stop-opacity="0"/></radialGradient>
<linearGradient id="lug" x1="0" y1="0" x2="0" y2="1"><stop offset="0" stop-color="#e0e0ff"/><stop offset="0.5" stop-color="#c4c4f4"/><stop offset="1" stop-color="#9898d0"/></linearGradient>
</defs>
<g transform="translate(-253,-82)">
<path d="M300.2 292 C 303 287.5, 312 284, 330 281 C 350 278.5, 370 277, 387.2 276.6 V 308 C 370 307.5, 350 306, 330 303.5 C 312 300.5, 303 296.5, 300.2 292 z" fill="url(#nose)" stroke="#2a2a40" stroke-width="0.8"/>
<ellipse cx="312" cy="291.8" rx="11" ry="1.6" fill="url(#hl)"/>
<path d="M566.2 276.4 L651.8 233.2 L691 233.2 L635.6 276.4 z" fill="#e29442" stroke="#2a2a30" stroke-width="0.9"/>
<path d="M566.2 308 L651.8 351.3 L691 351.3 L635.6 308 z" fill="#a06c3c" stroke="#2a2a30" stroke-width="0.9"/>
<rect x="386.8" y="276.6" width="177.2" height="31.4" fill="#000030" stroke="#101018" stroke-width="0.6"/>
<rect x="498.2" y="272.7" width="65.4" height="6.4" fill="url(#lug)" stroke="#404060" stroke-width="0.5"/>
<rect x="563.7" y="276.4" width="71.9" height="31.7" fill="url(#can)" stroke="#222" stroke-width="0.8"/>
<path d="M563.7 291.4 L635.6 291.4 L691 291.9 L635.6 292.6 L563.7 292.8z" fill="#3a2a20" stroke="#2a2a2a" stroke-width="0.5"/>
<path d="M652 292 Q 666 290.2, 681 292 Q 666 293.8, 652 292z" fill="#d08c48" stroke="#333" stroke-width="0.5"/>
<path d="M627 277v3.5M627 304v3.5" stroke="#333" stroke-width="0.7"/>
</g>
</svg>
<svg style="left:255px;top:405px" width="100" height="98" viewBox="0 0 100 98">
<g fill="#a6a6be" stroke="#6c6c7e" stroke-width="0.8" stroke-linejoin="round">
<path d="M46.1 6.8L54 15.9H38.2z"/>
<path d="M46.1 94.6L54 85.6H38.2z"/>
<path d="M2.2 50.4L11.2 42.3V58.6z"/>
<path d="M90 50.4L81 42.3V58.6z"/>
<path d="M34.94 11.00 L32.55 11.76 L30.20 12.68 L27.92 13.73 L25.70 14.92 L23.56 16.24 L21.51 17.70 L19.54 19.27 L17.68 20.96 L15.92 22.77 L14.28 24.67 L11.79 22.66 L12.04 35.35 L21.28 30.34 L18.48 28.07 L19.91 26.41 L21.43 24.85 L23.05 23.38 L24.76 22.01 L26.54 20.75 L28.40 19.60 L30.33 18.56 L32.31 17.65 L34.35 16.85 L36.43 16.19z"/>
<path d="M57.66 11.00 L60.05 11.76 L62.40 12.68 L64.68 13.73 L66.90 14.92 L69.04 16.24 L71.09 17.70 L73.06 19.27 L74.92 20.96 L76.68 22.77 L78.32 24.67 L80.81 22.66 L80.56 35.35 L71.32 30.34 L74.12 28.07 L72.69 26.41 L71.17 24.85 L69.55 23.38 L67.84 22.01 L66.06 20.75 L64.20 19.60 L62.27 18.56 L60.29 17.65 L58.25 16.85 L56.17 16.19z"/>
<circle cx="84.3" cy="12.3" r="3.9"/>
<path d="M25.1 34.2L30.2 29.6H61.9L67 34.2V66.4L61.9 71H30.2L25.1 66.4z" fill="#a8a8c0"/>
<path d="M30.2 39.2L35.2 34.2H56.8L61.9 39.2V60.8L56.8 65.9H35.2L30.2 60.8z" fill="#a2a2ba"/>
<path d="M35.2 29.6V34.2M56.8 29.6V34.2M67 39.2H61.9M67 60.8H61.9M56.8 71V65.9M35.2 71V65.9M25.1 60.8H30.2M25.1 39.2H30.2" fill="none"/>
<path d="M70 79L75 76.2L82.5 79V86L77.5 88.8L70 86z" fill="#a8a8c0"/>
<path d="M70 79L77.5 81.6L82.5 79M77.5 81.6V88.8" fill="none"/>
</g>
<path d="M22.8 40.2V73.3" stroke="#52a060" stroke-width="1.1"/>
<path d="M22.8 73.3H56.8" stroke="#b85a68" stroke-width="1.1"/>
</svg>
<div class="t" style="left:291.60px;top:451.00px;font-size:11.05px;color:#505062;transform:scaleX(0.800);-webkit-text-stroke:0.35px #505062;">TOP</div>
<div class="t" style="left:861.60px;top:84.00px;font-size:9.30px;color:#303030;transform:scaleX(0.883);">Tasks</div>
<svg style="left:998.5px;top:83.3px" width="9" height="9" viewBox="0 0 9 9"><rect x="0.5" y="0.5" width="8" height="8" rx="1.5" fill="none" stroke="#8a8a8a" stroke-width="0.9"/><path d="M0.5 3h8" stroke="#8a8a8a" stroke-width="0.9"/></svg>
<svg style="left:1013.0px;top:83.3px" width="9" height="9" viewBox="0 0 9 9"><rect x="0.5" y="3.2" width="5.3" height="5.3" rx="1" fill="none" stroke="#8a8a8a" stroke-width="0.9"/><path d="M3 3.2V1.5a1 1 0 0 1 1-1h3.5a1 1 0 0 1 1 1V5a1 1 0 0 1-1 1H5.8" fill="none" stroke="#8a8a8a" stroke-width="0.9"/></svg>
<div class="a" style="left:799px;top:100px;width:54px;height:16px;background:linear-gradient(180deg,#f4f8fc,#e3ebf3);border:1px solid #7db6ee;border-radius:2px"></div>
<div class="t" style="left:820.10px;top:105.00px;font-size:9.16px;color:#202020;transform:scaleX(0.794);">OK</div>
<div class="a" style="left:856.5px;top:100px;width:53.5px;height:16px;background:linear-gradient(180deg,#fafafa,#ececec);border:1px solid #c9c9c9;border-radius:2px"></div>
<div class="t" style="left:871.30px;top:105.00px;font-size:9.16px;color:#202020;transform:scaleX(0.817);">Cancel</div>
<div class="a" style="left:914px;top:100px;width:53.5px;height:16px;background:linear-gradient(180deg,#fafafa,#ececec);border:1px solid #c9c9c9;border-radius:2px"></div>
<div class="t" style="left:930.10px;top:105.00px;font-size:9.16px;color:#202020;transform:scaleX(0.895);">Apply</div>
<div class="a" style="left:750px;top:121px;width:263px;height:403px;background:#f0f0f0"></div>
<div class="a" style="left:1014px;top:122px;width:9px;height:402px;background:#f9f9f9;border-left:1.5px solid #a8a8a8;border-right:1px solid #c8c8c8"></div>
<div class="a" style="left:1014px;top:122px;width:9px;height:10px;background:#fdfdfd;border:1px solid #9a9a9a;border-left:1.5px solid #8a8a8a"></div>
<svg style="left:1015.5px;top:124.5px" width="6" height="5" viewBox="0 0 6 5"><path d="M0.5 3.8h5L3 0.8z" fill="#444"/></svg>
<div class="a" style="left:1014px;top:363.5px;width:9px;height:151px;background:#e3e3e3;border:1px solid #9a9a9a;border-left:1.5px solid #8a8a8a;border-top:1.5px solid #8a8a8a"></div>
<div class="a" style="left:1014px;top:514px;width:9px;height:10px;background:#fdfdfd;border:1px solid #9a9a9a;border-left:1.5px solid #8a8a8a;border-top:1.5px solid #777"></div>
<svg style="left:1015.5px;top:517px" width="6" height="5" viewBox="0 0 6 5"><path d="M0.5 0.8h5L3 3.8z" fill="#444"/></svg>
<div class="a" style="left:752.5px;top:131px;width:9.5px;height:9px;background:#f8f800;border:1px solid #a0a020;border-radius:1.5px"></div>
<div class="t" style="left:765.70px;top:133.00px;font-size:9.30px;font-weight:bold;color:#202020;transform:scaleX(0.841);">Body Tube Parameter</div>
<svg style="left:997px;top:134px" width="7" height="4" viewBox="0 0 7 4"><path d="M0.5 3.6L3.4 0.8L6.3 3.6" fill="none" stroke="#666" stroke-width="1.1"/></svg>
<div class="a" style="left:750.5px;top:145px;width:256px;height:1px;background:#c8c8c8"></div>
<div class="a" style="left:755px;top:171.5px;width:247px;height:352.5px;background:#fbfbfb;border:1px solid #d0d0d0;border-bottom:none"></div>
<div class="a" style="left:755px;top:155.5px;width:43.5px;height:16.5px;background:#ececec;border:1px solid #d0d0d0;border-bottom:none"></div>
<div class="a" style="left:839.3px;top:155.5px;width:45px;height:16.5px;background:#ececec;border:1px solid #d0d0d0;border-bottom:none"></div>
<div class="a" style="left:884.4px;top:155.5px;width:51px;height:16.5px;background:#ececec;border:1px solid #d0d0d0;border-bottom:none;border-left:none"></div>
<div class="a" style="left:798.3px;top:154.5px;width:41px;height:18px;background:#fbfbfb;border:1px solid #d0d0d0;border-bottom:none"></div>
<div class="t" style="left:762.50px;top:161.00px;font-size:9.30px;color:#333;transform:scaleX(0.813);">General</div>
<div class="t" style="left:805.60px;top:160.00px;font-size:9.30px;color:#333;transform:scaleX(0.813);">Scaling</div>
<div class="t" style="left:847.40px;top:161.00px;font-size:9.30px;color:#333;transform:scaleX(0.858);">Material</div>
<div class="t" style="left:892.60px;top:161.00px;font-size:9.30px;color:#333;transform:scaleX(0.794);">Comment</div>
<div class="a" style="left:764.2px;top:181.4px;width:9px;height:9.2px;background:#fff;border:1px solid #9a9a9a"></div>
<div class="t" style="left:775.60px;top:183.00px;font-size:9.01px;color:#222;transform:scaleX(0.839);">Scaling</div>
<div class="a" style="left:764px;top:193px;width:230px;height:96px;border:1px solid #dcdcdc"></div>
<div class="a" style="left:771px;top:204px;width:9.5px;height:8.5px;background:#f3f3f3;border:1px solid #c8c8c8"></div>
<div class="t" style="left:783.90px;top:205.00px;font-size:9.01px;color:#8a8a8a;transform:scaleX(0.868);">Override</div>
<svg style="left:771px;top:224.5px" width="10" height="10" viewBox="0 0 10 10"><circle cx="5" cy="5" r="4.4" fill="#f6f6f6" stroke="#bdbdbd" stroke-width="0.9"/><circle cx="5" cy="5" r="2.2" fill="#6a6a6a"/></svg>
<div class="t" style="left:784.40px;top:226.00px;font-size:9.01px;color:#8a8a8a;transform:scaleX(0.781);">Scale</div>
<svg style="left:771px;top:246.8px" width="10" height="10" viewBox="0 0 10 10"><circle cx="5" cy="5" r="4.4" fill="#f6f6f6" stroke="#bdbdbd" stroke-width="0.9"/></svg>
<div class="t" style="left:784.40px;top:249.00px;font-size:9.01px;color:#8a8a8a;transform:scaleX(0.884);">By body diameter</div>
<div class="a" style="left:855px;top:220px;width:82.39999999999998px;height:17.69999999999999px;background:#efefef;border:1px solid #c2c2c2;border-radius:2px"></div>
<div class="t" style="left:857.60px;top:227.00px;font-size:8.87px;color:#9a9a9a;transform:scaleX(0.846);">2.00</div>
<div class="a" style="left:941.7px;top:224.8px;width:9px;height:9px;background:#f3f3f3;border:1px solid #c8c8c8"></div>
<div class="t" style="left:953.60px;top:226.00px;font-size:9.01px;color:#8a8a8a;transform:scaleX(0.839);">Upscale</div>
<div class="a" style="left:855px;top:242px;width:82.39999999999998px;height:18.600000000000023px;background:#efefef;border:1px solid #c2c2c2;border-radius:2px"></div>
<div class="t" style="left:857.60px;top:249.00px;font-size:8.87px;color:#9a9a9a;transform:scaleX(0.880);">24.79 mm</div>
<div class="a" style="left:855px;top:265.4px;width:82.4px;height:15.3px;background:linear-gradient(180deg,#f8f8f8,#eeeeee);border:1px solid #cfcfcf;border-radius:2px"></div>
<div class="t" style="left:880.10px;top:270.00px;font-size:8.87px;color:#9a9a9a;transform:scaleX(0.864);">Lookup...</div>
<div class="t" style="left:762.60px;top:295.00px;font-size:9.01px;color:#333;transform:scaleX(0.834);">Scaled Values</div>
<div class="a" style="left:764px;top:305.7px;width:230px;height:99.3px;border:1px solid #dcdcdc;background:#f9f9f9"></div>
<div class="t" style="left:771.20px;top:320.00px;font-size:9.01px;color:#222;transform:scaleX(0.772);">Scale</div>
<div class="a" style="left:808.4px;top:313.6px;width:177.30000000000007px;height:17.799999999999955px;background:#efefef;border:1px solid #c2c2c2;border-radius:2px"></div>
<div class="t" style="left:811.00px;top:320.00px;font-size:8.87px;color:#9a9a9a;transform:scaleX(0.828);">1.0</div>
<div class="t" style="left:771.20px;top:343.00px;font-size:9.01px;color:#222;transform:scaleX(0.874);">Length</div>
<div class="a" style="left:808.4px;top:336.5px;width:177.30000000000007px;height:17.69999999999999px;background:#efefef;border:1px solid #c2c2c2;border-radius:2px"></div>
<div class="t" style="left:811.00px;top:343.00px;font-size:8.87px;color:#9a9a9a;transform:scaleX(0.877);">137.16 mm</div>
<div class="t" style="left:771.20px;top:365.00px;font-size:9.01px;color:#222;transform:scaleX(0.867);">Diameter</div>
<div class="a" style="left:808.4px;top:359px;width:177.30000000000007px;height:17.80000000000001px;background:#efefef;border:1px solid #c2c2c2;border-radius:2px"></div>
<div class="t" style="left:811.00px;top:365.00px;font-size:8.87px;color:#9a9a9a;transform:scaleX(0.878);">24.79 mm</div>
<div class="a" style="left:818px;top:381.4px;width:53.39999999999998px;height:15.800000000000011px;background:linear-gradient(180deg,#fafafa,#ececec);border:1px solid #c9c9c9;border-radius:2px"></div>
<div class="t" style="left:830.90px;top:386.00px;font-size:9.16px;color:#202020;transform:scaleX(0.807);">Set Part</div>
<div class="a" style="left:875.2px;top:381.4px;width:53.299999999999955px;height:15.800000000000011px;background:linear-gradient(180deg,#fafafa,#ececec);border:1px solid #c9c9c9;border-radius:2px"></div>
<div class="t" style="left:882.80px;top:386.00px;font-size:9.16px;color:#202020;transform:scaleX(0.873);">Set Stage</div>
<div class="a" style="left:932.8px;top:381.4px;width:53.40000000000009px;height:15.800000000000011px;background:linear-gradient(180deg,#fafafa,#ececec);border:1px solid #c9c9c9;border-radius:2px"></div>
<div class="t" style="left:938.20px;top:386.00px;font-size:9.16px;color:#202020;transform:scaleX(0.875);">Set Rocket</div>
<div class="t" style="left:1.60px;top:531.00px;font-size:8.87px;color:#202020;transform:scaleX(0.857);">Preselected: Estes_Alpha_III_rkt.Fin.Edge9 (280.08 mm, -46.27 mm, -25.92 mm)</div>
<svg style="left:872px;top:529px" width="8" height="12" viewBox="0 0 8 12"><rect x="1" y="1" width="6" height="9.5" rx="3" fill="none" stroke="#333" stroke-width="1"/><path d="M4 1v3" stroke="#333" stroke-width="0.9"/></svg>
<div class="t" style="left:883.20px;top:532.00px;font-size:9.16px;color:#202020;transform:scaleX(0.807);">CAD</div>
<svg style="left:909px;top:533px" width="5" height="3" viewBox="0 0 5 3"><path d="M0 0h4.5L2.25 2.5z" fill="#666"/></svg>
<div class="t" style="left:925.60px;top:532.00px;font-size:9.16px;color:#202020;transform:scaleX(0.849);">376.53 mm x 327.29 mm</div>
<svg style="left:1013.5px;top:533px" width="5" height="3" viewBox="0 0 5 3"><path d="M0 0h4.5L2.25 2.5z" fill="#666"/></svg>
<div class="a" style="left:0px;top:506px;width:34px;height:16px;background:#e9e9e9;border:1px solid #d0d0d0;border-top:none;border-left:none"></div>
<div class="a" style="left:33.8px;top:506px;width:31.5px;height:17.4px;background:#fff;border:1px solid #d0d0d0;border-top:none"></div>
<div class="t" style="left:7.70px;top:512.00px;font-size:9.16px;color:#333;transform:scaleX(0.859);">View</div>
<div class="t" style="left:41.20px;top:513.00px;font-size:9.16px;color:#222;transform:scaleX(0.832);">Data</div>
<div class="a" style="left:253px;top:503px;width:63px;height:19.3px;background:#e6e6e6;border:1px solid #d0d0d0;border-top:none;border-radius:0 0 0 3px"></div>
<div class="a" style="left:316px;top:503px;width:109px;height:20.5px;background:#f5f5f5;border:1px solid #d4d4d4;border-top:none;border-radius:0 0 2px 2px"></div>
<svg style="left:262px;top:508px" width="10" height="11" viewBox="0 0 10 11"><path d="M0 10.8V1.5Q0 0 1.5 0H9V2.2L7.8 3.5H2.2V9.8L1 10.8z" fill="#e0404a"/><path d="M2.2 10.9L2.2 4H9.2L8 5.6L9.3 7L7.4 8.2H5.2L6.2 8.9L3.8 11z" fill="#3a8ae6"/></svg>
<div class="t" style="left:274.60px;top:510.00px;font-size:9.16px;color:#333;transform:scaleX(0.838);">Start</div>
<div class="a" style="left:296px;top:509px;width:8.5px;height:8.5px;background:#d4d4d4;border:1px solid #c4c4c4"></div>
<svg style="left:297.5px;top:510.5px" width="6" height="6" viewBox="0 0 6 6"><path d="M1 1l4 4M5 1L1 5" stroke="#fff" stroke-width="1.1"/></svg>
<svg style="left:324px;top:508px" width="9" height="11" viewBox="0 0 9 11"><path d="M0.5 0.5h5.5l2.5 2.5v7.5h-8z" fill="#f4f4f4" stroke="#9a9a9a" stroke-width="0.9"/><circle cx="4" cy="6.3" r="2.6" fill="#2d5aa8"/><path d="M4.3 3.3a2.5 2.5 0 0 1 3 1.5l-1.6 1.2z" fill="#e02020"/></svg>
<div class="t" style="left:336.20px;top:511.00px;font-size:9.16px;color:#333;transform:scaleX(0.863);">Estes-Alpha-III : 1*</div>
<div class="a" style="left:405.5px;top:509px;width:9.5px;height:10px;background:#eb8c6c;border-radius:1.5px"></div>
<svg style="left:408px;top:512px" width="5" height="5" viewBox="0 0 5 5"><path d="M0.5 0.5l4 4M4.5 0.5l-4 4" stroke="#fff" stroke-width="0.9"/></svg>
</body></html>
